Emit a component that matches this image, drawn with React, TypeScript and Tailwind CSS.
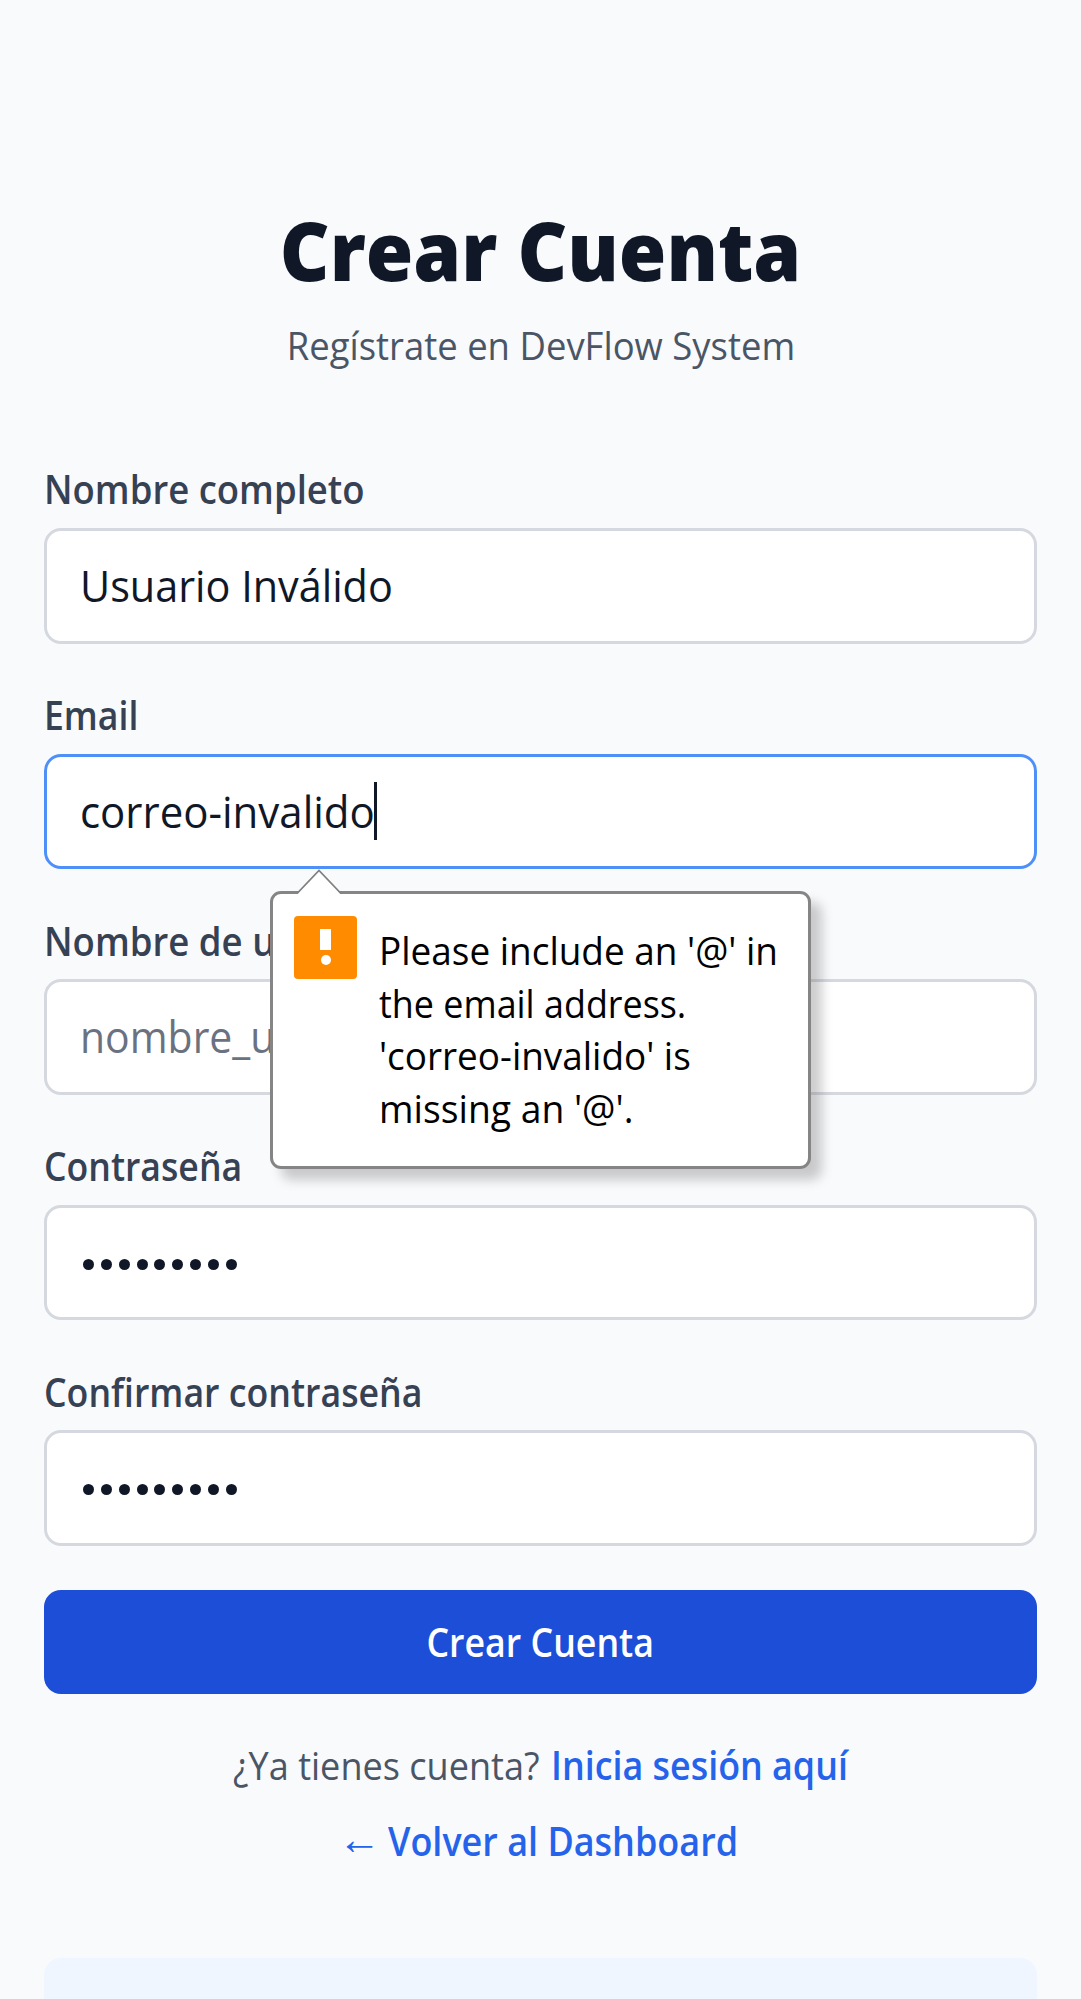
import React from 'react';
import type { ReactNode } from 'react';

function Condensed({ className, children }: { className: string; children: ReactNode }) {
  return <span className={`inline-block whitespace-nowrap ${className}`}>{children}</span>;
}

interface FieldProps {
  label: string;
  labelClass: string;
  focused?: boolean;
  children: ReactNode;
  overlay?: ReactNode;
}

function Field({ label, labelClass, focused = false, children, overlay }: FieldProps) {
  return (
    <div className="relative">
      <label className="mb-[10.3px] block h-[57.4px] pt-[1px] text-[39px] leading-[56.4px] font-semibold text-gray-700">
        <Condensed className={`origin-left ${labelClass}`}>{label}</Condensed>
      </label>
      <div
        className={`flex h-[115.5px] items-center rounded-[17px] border-[3px] bg-white pb-[1px] pl-[33px] text-[44px] leading-[60px] text-gray-900 ${
          focused ? 'border-[#4f90f8]' : 'border-[#d5d8de]'
        }`}
      >
        {children}
      </div>
      {overlay}
    </div>
  );
}

function PasswordDots() {
  return (
    <div className="flex gap-[6.85px] pl-[3px] pt-[4px]">
      {Array.from({ length: 9 }, (_, i) => (
        <span key={i} className="size-[11px] rounded-full bg-gray-900" />
      ))}
    </div>
  );
}

function ValidationBubble() {
  return (
    <div className="absolute top-[204.9px] left-[226px] z-10 flex h-[278px] w-[541px] gap-[22px] rounded-[11px] border-[3px] border-[#858585] bg-white pt-[22px] pl-[21px] shadow-[11px_11px_11px_rgba(100,100,100,0.32)]">
      <svg className="absolute -top-[25px] left-[23px]" width="48" height="26" viewBox="0 0 48 26" fill="none">
        <path d="M1 25.5 L23 2 L45 25.5 Z" fill="#fff" />
        <path d="M1 24.5 L23 1.5 L45 24.5" stroke="#808080" strokeWidth="1.8" />
      </svg>
      <div className="flex h-[63px] w-[63px] shrink-0 flex-col items-center gap-[5px] rounded-[4px] bg-[#ff8c00] pt-[13px]">
        <span className="h-[21px] w-[11px] bg-white" />
        <span className="size-[10px] rounded-full bg-white" />
      </div>
      <div className="flex flex-col pt-[8.6px] text-[39px] leading-[52.4px] text-black">
        <Condensed className="origin-left scale-x-[0.947]">Please include an '@' in</Condensed>
        <Condensed className="origin-left scale-x-[0.92]">the email address.</Condensed>
        <Condensed className="origin-left scale-x-[0.946]">'correo-invalido' is</Condensed>
        <Condensed className="origin-left scale-x-[0.956]">missing an '@'.</Condensed>
      </div>
    </div>
  );
}

export default function App() {
  return (
    <main className="h-[1999px] w-[1081px] overflow-hidden bg-[#f9fafc] px-[44px] pt-[199px] font-['Open_Sans',sans-serif]">
      <header className="flex flex-col items-center">
        <h1 className="text-[81px] leading-[101.5px] font-extrabold text-gray-900">
          <Condensed className="scale-x-[0.95]">Crear Cuenta</Condensed>
        </h1>
        <p className="mt-[16.3px] text-[39px] leading-[56.4px] text-gray-600">
          <Condensed className="scale-x-[0.935]">Regístrate en DevFlow System</Condensed>
        </p>
      </header>

      <form className="mt-[87.2px] flex flex-col gap-[42.4px]">
        <Field label="Nombre completo" labelClass="scale-x-[0.936]">
          <Condensed className="origin-left scale-x-[0.94]">Usuario Inválido</Condensed>
        </Field>
        <Field label="Email" labelClass="scale-x-[0.913]" focused overlay={<ValidationBubble />}>
          <Condensed className="w-[294px] origin-left scale-x-[0.954]">correo-invalido</Condensed>
          <span className="h-[58px] w-[3px] bg-gray-900" />
        </Field>
        <Field label="Nombre de usuario" labelClass="scale-x-[0.937]">
          <Condensed className="origin-left scale-x-[0.93] text-gray-500">nombre_usuario</Condensed>
        </Field>
        <Field label="Contraseña" labelClass="scale-x-[0.913]">
          <PasswordDots />
        </Field>
        <Field label="Confirmar contraseña" labelClass="scale-x-[0.915]">
          <PasswordDots />
        </Field>
        <button
          type="button"
          className="mt-[1.5px] h-[104.3px] rounded-[17px] bg-[#1d4ed8] text-[39px] leading-[56.4px] font-semibold text-white"
        >
          <Condensed className="scale-x-[0.916]">Crear Cuenta</Condensed>
        </button>
      </form>

      <nav className="mt-[42.5px] flex flex-col gap-[20.3px] text-[39px] leading-[56.4px]">
        <p className="flex justify-center gap-[12px] pl-[1px]">
          <Condensed className="w-[306px] origin-left scale-x-[0.925] text-gray-600">¿Ya tienes cuenta?</Condensed>
          <a className="w-[298px] font-semibold text-[#2563eb]">
            <Condensed className="origin-left scale-x-[0.919]">Inicia sesión aquí</Condensed>
          </a>
        </p>
        <a className="flex justify-center font-semibold text-[#2563eb]">
          <span className="-mt-[3px] mr-[6px] -ml-[6px] h-[56px] w-[44px] text-[43px] font-normal">←</span>
          <Condensed className="w-[349px] origin-left scale-x-[0.922]">Volver al Dashboard</Condensed>
        </a>
      </nav>

      <section className="mt-[88px] h-[200px] rounded-[17px] bg-[#eff6ff]" />
    </main>
  );
}
